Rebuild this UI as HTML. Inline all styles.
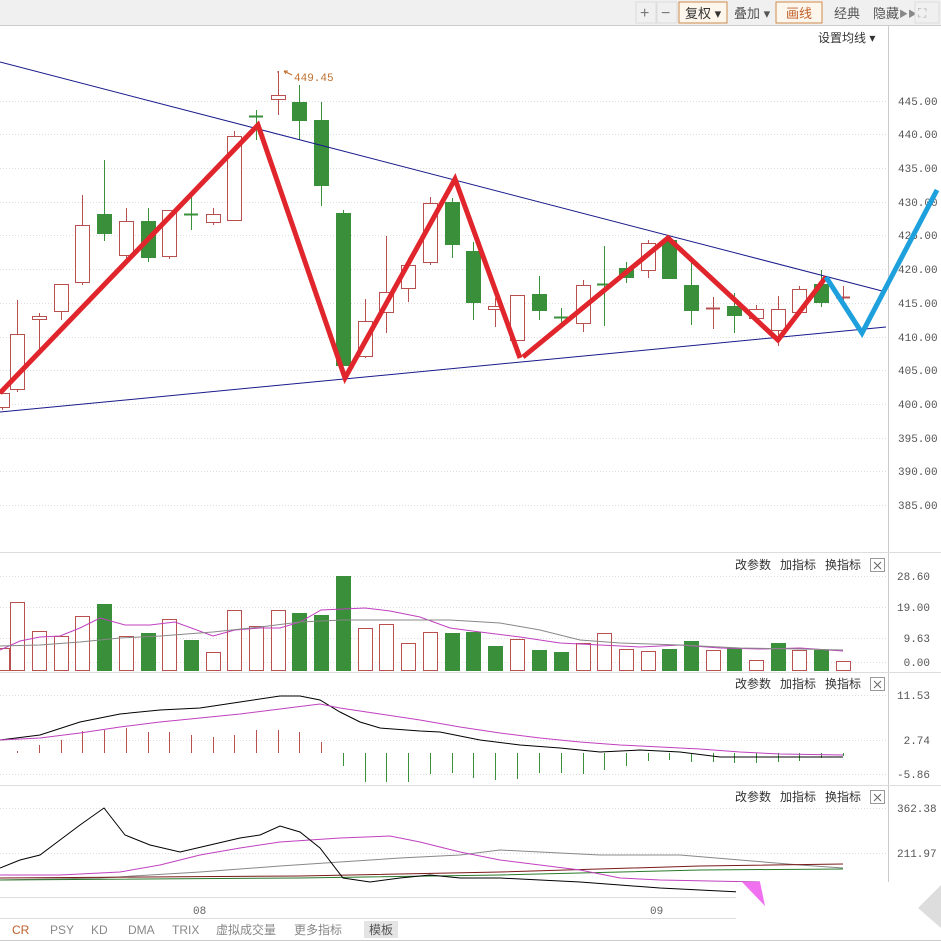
<!DOCTYPE html>
<html><head><meta charset="utf-8"><style>
body{margin:0;width:941px;height:941px;overflow:hidden;background:#fff;font-family:"Liberation Sans","Noto Sans CJK SC",sans-serif}
svg{position:absolute;left:0;top:0}
.t{font-family:"Liberation Mono",monospace;font-size:11px;fill:#555}
.c{font-family:"Liberation Sans","Noto Sans CJK SC",sans-serif;font-size:12px;fill:#333}
</style></head><body>
<svg id="s" width="941" height="941" xmlns="http://www.w3.org/2000/svg">
<rect x="0" y="0" width="941" height="25" fill="#f0f0f0"/>
<line x1="0" y1="25.5" x2="941" y2="25.5" stroke="#ccc"/>
<g class="c" font-size="13">
<rect x="636" y="2" width="20" height="21" fill="#f0f0f0" stroke="#ddd"/><text x="640" y="18" fill="#777" font-size="16">+</text>
<rect x="657" y="2" width="20" height="21" fill="#f0f0f0" stroke="#ddd"/><text x="661" y="18" fill="#777" font-size="16">−</text>
<rect x="679" y="2" width="48" height="21" fill="#fdf6ec" stroke="#d08a4a"/><text x="685" y="18" fill="#c0602a" class="c" style="font-size:13px">复权 ▾</text>
<text x="734" y="18" class="c" style="font-size:13px;fill:#555">叠加 ▾</text>
<rect x="776" y="2" width="46" height="21" fill="#fdf6ec" stroke="#d08a4a"/><text x="786" y="18" class="c" style="font-size:13px;fill:#c0602a">画线</text>
<text x="834" y="18" class="c" style="font-size:13px;fill:#555">经典</text>
<text x="873" y="18" class="c" style="font-size:13px;fill:#555">隐藏</text><text x="899" y="17" fill="#888" font-size="9">▶▶</text>
<rect x="915" y="2" width="24" height="21" fill="#f0f0f0" stroke="#ddd"/><text x="918" y="17" fill="#aaa" font-size="12">⛶</text>
</g>
<text x="818" y="42" class="c" style="font-size:12px">设置均线 ▾</text>
<line x1="888.5" y1="26" x2="888.5" y2="897" stroke="#ccc"/>
<line x1="0" y1="552.5" x2="941" y2="552.5" stroke="#ddd"/>
<line x1="0" y1="672.5" x2="941" y2="672.5" stroke="#ddd"/>
<line x1="0" y1="785.5" x2="941" y2="785.5" stroke="#ddd"/>
<line x1="0" y1="897.5" x2="888" y2="897.5" stroke="#ddd"/>
<line x1="0" y1="918.5" x2="736" y2="918.5" stroke="#ddd"/>
<line x1="0" y1="940.5" x2="941" y2="940.5" stroke="#ccc"/>
<g id="g"></g>
</svg>
<script>
var ns="http://www.w3.org/2000/svg",G=document.getElementById('g');
function el(t,a,txt){var e=document.createElementNS(ns,t);for(var k in a)e.setAttribute(k,a[k]);if(txt)e.textContent=txt;G.appendChild(e);return e}
// grid + price labels
var pl=[[445,101],[440,134],[435,168],[430,202],[425,235],[420,269],[415,303],[410,337],[405,370],[400,404],[395,438],[390,471],[385,505]];
pl.forEach(function(p){el('line',{x1:0,y1:p[1]+.5,x2:886,y2:p[1]+.5,stroke:'#ddd','stroke-dasharray':'1 2'});el('text',{x:898,y:p[1]+4,'class':'t'},p[0].toFixed(2))});
[[576,'28.60'],[607,'19.00'],[638,' 9.63'],[662,' 0.00'],[695,'11.53'],[740,' 2.74'],[774,'-5.86'],[808,'362.38'],[853,'211.97']].forEach(function(p){el('line',{x1:0,y1:p[0]+.5,x2:886,y2:p[0]+.5,stroke:'#ddd','stroke-dasharray':'1 2'});el('text',{x:897,y:p[0]+4,'class':'t',style:'white-space:pre'},p[1])});
// candles
var C=[[2,393,407,390,410,0],[17,334,389,300,392,0],[39,316,319,313,350,0],[61,284,311,284,320,0],[82,225,282,195,285,0],[104,214,233,160,241,1],[126,221,255,208,258,0],[148,221,257,208,262,1],[169,210,256,210,259,0],[191,214,216,197,230,1],[213,214,222,208,225,0],[234,136,220,131,220,0],[256,116,118,110,140,1],[278,95,99,71,115,0],[299,102,120,85,140,1],[321,120,185,102,206,1],[343,213,365,210,365,1],[365,321,356,299,358,0],[386,292,312,236,333,0],[408,265,288,258,302,0],[430,203,262,197,265,0],[452,202,244,198,258,1],[473,251,302,242,320,1],[495,306,309,298,327,0],[517,295,340,295,340,0],[539,294,310,276,320,1],[561,317,319,308,327,1],[583,285,323,280,332,0],[604,284,285,246,326,1],[626,268,277,262,283,1],[648,243,270,240,278,0],[669,240,278,238,278,1],[691,285,310,263,325,1],[713,308,309,297,329,0],[734,306,315,293,333,1],[756,309,318,305,320,0],[778,309,330,296,346,0],[799,289,312,286,313,0],[821,284,302,270,307,1],[843,297,298,286,300,0]];
C.forEach(function(c){var col=c[5]?'#3a8f3a':'#b85050';el('line',{x1:c[0]+.5,y1:c[3],x2:c[0]+.5,y2:c[4],stroke:col});
if(c[2]-c[1]<3)el('line',{x1:c[0]-7,y1:c[1]+.5,x2:c[0]+7,y2:c[1]+.5,stroke:col,'stroke-width':2});
else el('rect',{x:c[0]-6.5,y:c[1]+.5,width:14,height:c[2]-c[1],fill:c[5]?col:'#fff',stroke:col})});
el('line',{x1:278,y1:71,x2:278,y2:73,stroke:'#b85050'});
el('path',{d:'M284 71 L292 75',stroke:'#c07030',fill:'none'});el('path',{d:'M284 71 l4 0 M284 71 l2 3',stroke:'#c07030'});
el('text',{x:294,y:81,style:'font-family:Liberation Mono,monospace;font-size:11px;fill:#c07030'},'449.45');
// trend lines
el('line',{x1:0,y1:62,x2:886,y2:292,stroke:'#1a1a8c'});
el('line',{x1:0,y1:412,x2:886,y2:327,stroke:'#1a1a8c'});
el('polyline',{points:'0,393 258,125 345,378 455,179 520,358',fill:'none',stroke:'#e0262c','stroke-width':5,'stroke-linejoin':'miter'});
el('polyline',{points:'523,357 668,238 778,340 826,277',fill:'none',stroke:'#e0262c','stroke-width':5});
el('polyline',{points:'826,277 862,333 937,190',fill:'none',stroke:'#1ea0dc','stroke-width':5});
// volume
var V=[648,602,631,636,616,604,636,633,619,640,652,610,626,610,613,615,576,628,624,643,632,633,632,646,639,650,652,643,633,649,651,649,641,650,648,660,643,650,650,661];
var VG=[0,0,0,0,0,1,0,1,0,1,0,0,0,0,1,1,1,0,0,0,0,1,1,1,0,1,1,0,0,0,0,1,1,0,1,0,1,0,1,0];
V.forEach(function(v,i){var x=C[i][0];var col=VG[i]?'#3a8f3a':'#b85050';el('rect',{x:x-6.5,y:v+.5,width:14,height:670-v,fill:VG[i]?col:'#fff',stroke:col})});
el('polyline',{points:'0,650 20,641 40,637 60,636 80,628 100,618 125,625 150,625 175,622 213,636 235,630 260,628 280,628 300,622 321,610 343,609 365,608 390,611 420,617 450,628 480,632 520,637 560,643 600,645 640,647 680,645 720,648 760,649 800,648 843,651',fill:'none',stroke:'#c040c0'});
el('polyline',{points:'0,646 40,645 80,642 120,638 160,636 213,632 260,627 300,622 343,620 420,620 450,620 500,623 540,630 580,640 620,643 680,645 740,648 800,649 843,650',fill:'none',stroke:'#888'});
// MACD
var H=[[17,751],[39,745],[61,740],[82,731],[104,730],[126,728],[148,732],[169,732],[191,735],[213,737],[234,735],[256,730],[278,730],[299,732],[321,742],[343,766],[365,782],[386,782],[408,782],[430,774],[452,773],[473,778],[495,780],[517,779],[539,773],[561,773],[583,774],[604,770],[626,766],[648,761],[669,760],[691,762],[713,762],[734,763],[756,763],[778,762],[799,761],[821,758],[843,756]];
H.forEach(function(h){el('line',{x1:h[0]+.5,y1:753,x2:h[0]+.5,y2:h[1],stroke:h[1]<753?'#b85050':'#3a8f3a'})});
el('polyline',{points:'0,740 40,735 80,722 120,714 160,710 200,708 240,702 280,696 300,696 320,700 340,712 360,722 380,728 420,731 440,732 480,740 520,745 560,748 600,752 640,750 680,752 720,757 843,757',fill:'none',stroke:'#000'});
el('polyline',{points:'0,740 40,738 80,733 120,727 160,722 200,718 240,714 280,709 320,704 340,708 380,714 420,720 460,727 500,733 540,738 580,742 620,745 660,747 700,749 740,752 780,754 843,755',fill:'none',stroke:'#c040c0'});
// CR
el('polyline',{points:'0,880 100,878 200,872 280,866 340,862 400,858 460,855 500,850 540,852 600,855 680,855 740,860 800,865 843,868',fill:'none',stroke:'#888'});
el('polyline',{points:'0,878 300,876 500,872 700,866 843,864',fill:'none',stroke:'#7a1a1a'});
el('polyline',{points:'0,880 300,878 500,875 700,870 843,869',fill:'none',stroke:'#2a7a2a'});
el('polyline',{points:'0,875 60,875 120,872 160,865 200,855 240,848 280,842 340,838 390,836 420,842 460,852 500,860 540,865 580,870 620,878 660,880 760,882',fill:'none',stroke:'#c040c0'});
el('polyline',{points:'0,868 20,860 40,855 60,840 80,825 104,808 125,835 150,845 180,852 210,845 240,838 260,835 280,826 300,832 320,848 343,878 370,882 400,878 430,875 460,878 500,878 540,880 580,882 620,885 660,888 700,890 740,892',fill:'none',stroke:'#000'});
// white overlay
el('rect',{x:736,y:882,width:205,height:58,fill:'#fff'});
el('path',{d:'M742 882 L760 882 L765 906 Z',fill:'#f070f0'});
el('path',{d:'M941 885 L918 908 L941 928 Z',fill:'#ddd'});
// date axis + tabs
el('text',{x:193,y:914,'class':'t',style:'font-size:11px;fill:#666'},'08');
el('text',{x:650,y:914,'class':'t',style:'font-size:11px;fill:#666'},'09');
[[12,'CR','#c0602a'],[50,'PSY','#888'],[91,'KD','#888'],[128,'DMA','#888'],[172,'TRIX','#888'],[216,'虚拟成交量','#888'],[294,'更多指标','#888']].forEach(function(t){el('text',{x:t[0],y:934,'class':'c',style:'font-size:12px;fill:'+t[2]},t[1])});
el('rect',{x:364,y:921,width:34,height:17,fill:'#e4e4e4'});
el('text',{x:369,y:934,'class':'c',style:'font-size:12px;fill:#555'},'模板');
[565,684,797].forEach(function(y){
el('text',{x:735,y:y+4,'class':'c',style:'font-size:12px'},'改参数');
el('text',{x:780,y:y+4,'class':'c',style:'font-size:12px'},'加指标');
el('text',{x:825,y:y+4,'class':'c',style:'font-size:12px'},'换指标');
el('rect',{x:870.5,y:y-6.5,width:14,height:13,fill:'#fff',stroke:'#999'});
el('path',{d:'M874 '+(y-3)+' l7 7 M881 '+(y-3)+' l-7 7',stroke:'#666'});});
</script>
</body></html>
